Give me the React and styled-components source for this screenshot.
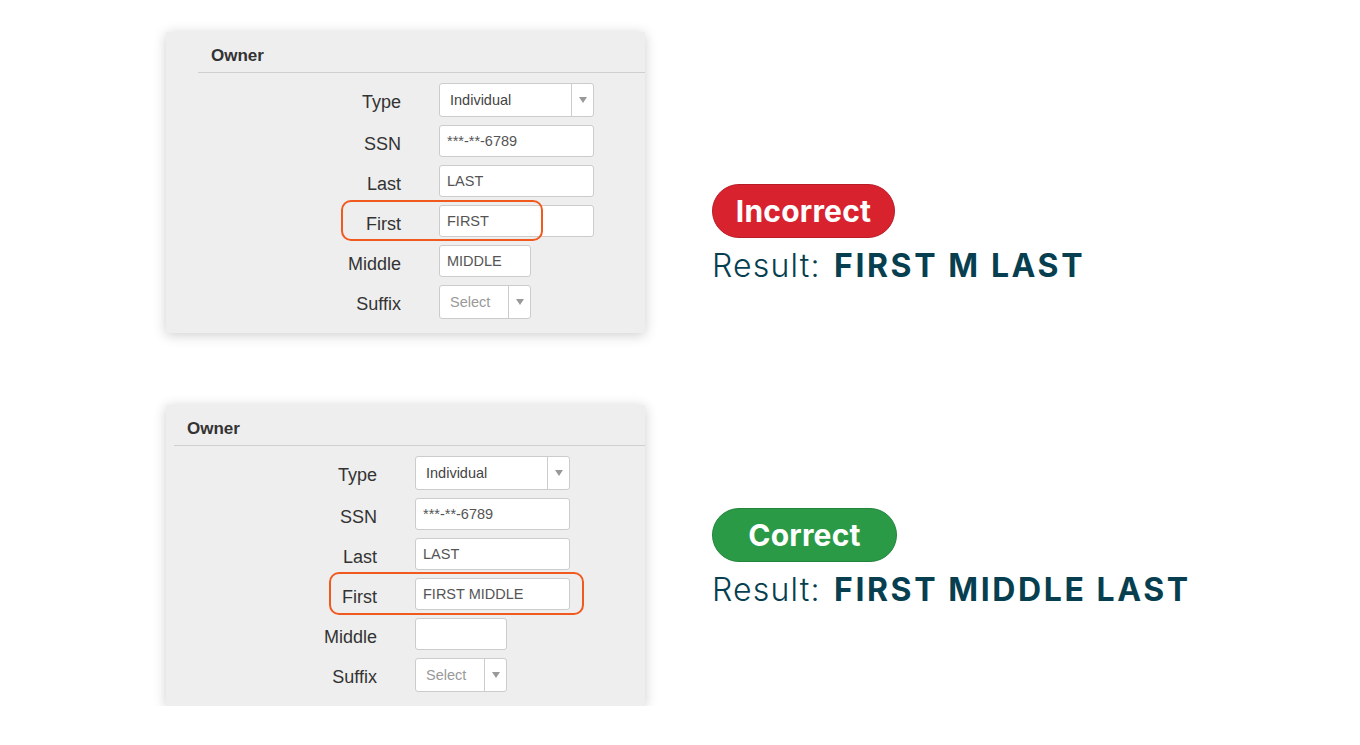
import React from 'react';
import styled, { createGlobalStyle } from 'styled-components';

const GlobalStyle = createGlobalStyle`
  body {
    margin: 0;
    background: #fff;
    font-family: "Liberation Sans", Arial, sans-serif;
  }
`

const Page = styled.div`
  display: flex;
  flex-direction: column;
  gap: 72px;
  padding: 32px 0 0 166px;
`

const Example = styled.section`
  display: flex;
  align-items: flex-start;
  gap: 67px;
`

const Panel = styled.div`
  width: 479px;
  box-sizing: border-box;
  background: #eeeeee;
  box-shadow: 0 2px 12px rgba(0, 0, 0, 0.2);
  padding: 0 0 14px ${p => p.$inset}px;
`

const PanelHeader = styled.h3`
  margin: 0;
  height: 41px;
  box-sizing: border-box;
  padding: 14px 0 0 13px;
  border-bottom: 1px solid #cfcfcf;
  font-size: 17px;
  line-height: 20px;
  font-weight: 700;
  color: #333;
`

const Form = styled.div`
  display: flex;
  flex-direction: column;
  gap: 8px;
  padding-top: 10px;
`

const Row = styled.div`
  display: flex;
  align-items: flex-start;
  position: relative;
`

const Label = styled.label`
  width: 203px;
  margin-right: 38px;
  padding-top: 6px;
  text-align: right;
  font-size: 18px;
  line-height: 26px;
  color: #333;
`

const Field = styled.div`
  display: flex;
  align-items: center;
  width: ${p => p.$width}px;
  height: 32px;
  box-sizing: border-box;
  padding-left: 7px;
  background: #fff;
  border: 1px solid #cccccc;
  border-radius: 3px;
  font-size: 14.5px;
  color: #555;
`

const SelectBox = styled(Field)`
  height: 34px;
  padding-left: 10px;
  color: ${p => (p.$placeholder ? '#999' : '#444')};
`

const SelectText = styled.span`
  flex: 1;
`

const Arrow = styled.span`
  display: flex;
  align-items: center;
  justify-content: center;
  width: 21px;
  height: 100%;
  border-left: 1px solid #cccccc;
`

const Highlight = styled.div`
  position: absolute;
  left: ${p => p.$left}px;
  top: ${p => p.$top}px;
  width: ${p => p.$width}px;
  height: ${p => p.$height}px;
  box-sizing: border-box;
  border: 2px solid #f15a1f;
  border-radius: 10px;
  pointer-events: none;
`

const Verdict = styled.div`
  display: flex;
  flex-direction: column;
  align-items: flex-start;
  margin-top: ${p => p.$offset}px;
  font-family: Inter, "Open Sans", sans-serif;
`

const Badge = styled.div`
  display: flex;
  align-items: center;
  justify-content: center;
  width: ${p => p.$width}px;
  height: 54px;
  box-sizing: border-box;
  border-radius: 27px;
  background: ${p => p.$bg};
  border: 1px solid ${p => p.$edge};
  color: #fff;
  font-size: 30px;
  font-weight: 700;
  letter-spacing: 0.2px;
`

const Result = styled.div`
  margin-top: 9px;
  font-size: 32px;
  line-height: 1.2;
  font-weight: 300;
  color: #073f50;
  letter-spacing: 1.2px;
  word-spacing: 3px;
  white-space: nowrap;

  strong {
    font-weight: 700;
    letter-spacing: 2.6px;
    word-spacing: 0;
  }
`

const Caret = () => (
  <svg width="8" height="6" viewBox="0 0 8 6">
    <polygon points="0,0 8,0 4,6" fill="#999" />
  </svg>
)

const Select = ({ width, value, placeholder }) => (
  <SelectBox $width={width} $placeholder={placeholder}>
    <SelectText>{value}</SelectText>
    <Arrow><Caret /></Arrow>
  </SelectBox>
)

const OwnerPanel = ({ inset, first, middle, highlight }) => (
  <Panel $inset={inset}>
    <PanelHeader>Owner</PanelHeader>
    <Form>
      <Row>
        <Label>Type</Label>
        <Select width={155} value="Individual" />
      </Row>
      <Row>
        <Label>SSN</Label>
        <Field $width={155}>***-**-6789</Field>
      </Row>
      <Row>
        <Label>Last</Label>
        <Field $width={155}>LAST</Field>
      </Row>
      <Row>
        <Label>First</Label>
        <Field $width={155}>{first}</Field>
        <Highlight $left={highlight.left} $top={highlight.top} $width={highlight.width} $height={highlight.height} />
      </Row>
      <Row>
        <Label>Middle</Label>
        <Field $width={92}>{middle}</Field>
      </Row>
      <Row>
        <Label>Suffix</Label>
        <Select width={92} value="Select" placeholder />
      </Row>
    </Form>
  </Panel>
)

export default function App() {
  return (
    <Page>
      <GlobalStyle />
      <Example>
        <OwnerPanel
          inset={32}
          first="FIRST"
          middle="MIDDLE"
          highlight={{ left: 143, top: -5, width: 202, height: 41 }}
        />
        <Verdict $offset={152}>
          <Badge $width={183} $bg="#d8232f" $edge="#b81c27">Incorrect</Badge>
          <Result>Result: <strong>FIRST M LAST</strong></Result>
        </Verdict>
      </Example>
      <Example>
        <OwnerPanel
          inset={8}
          first="FIRST MIDDLE"
          middle=""
          highlight={{ left: 155, top: -6, width: 255, height: 43 }}
        />
        <Verdict $offset={103}>
          <Badge $width={185} $bg="#2a9a47" $edge="#23843c">Correct</Badge>
          <Result>Result: <strong>FIRST MIDDLE LAST</strong></Result>
        </Verdict>
      </Example>
    </Page>
  );
}
